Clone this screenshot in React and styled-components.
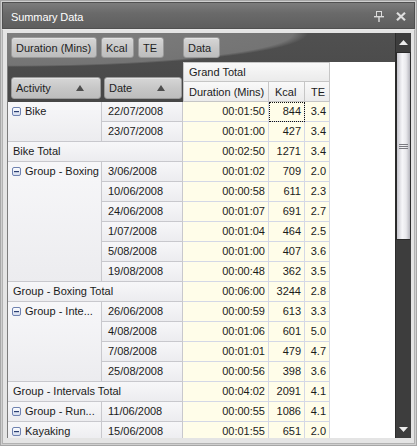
import React from 'react';
import styled, { createGlobalStyle } from 'styled-components';

const COLUMNS = '94px 81px 86px 36px 25px 1fr';

const GlobalStyle = createGlobalStyle`
  * {
    box-sizing: border-box;
  }

  html,
  body {
    margin: 0;
    padding: 0;
    background: #d2d2d2;
  }

  body {
    font-family: 'Liberation Sans', Arial, sans-serif;
    font-size: 11px;
    color: #1b1b1b;
  }
`;

const Window = styled.div`
  width: 417px;
  height: 446px;
  display: flex;
  flex-direction: column;
  border: 1px solid #a6a6a6;
  padding: 1px;
  background: #cfcfcf;
  overflow: hidden;
`;

const TitleBar = styled.div`
  height: 27px;
  flex: none;
  display: flex;
  align-items: center;
  padding: 3px 8px 0 8px;
  border: 1px solid #505050;
  background: linear-gradient(#7c7c7c, #6a6a6a 40%, #5e5e5e);
  color: #fff;
`;

const Title = styled.span`
  flex: 1;
  font-size: 11px;
  letter-spacing: -0.1px;
`;

const TitleTools = styled.div`
  display: flex;
  align-items: center;
  gap: 12px;
  margin-top: -2px;
`;

const Frame = styled.div`
  flex: 1;
  min-height: 0;
  display: flex;
  border: 1px solid #b2b2b2;
  border-top-color: #e8e8e8;
  background: #e4e4e4;
  padding: 3px 3px 5px 4px;
`;

const Pivot = styled.div`
  flex: 1;
  min-width: 0;
  display: flex;
  border-left: 1px solid #7c7c7c;
  overflow: hidden;
`;

const PivotGrid = styled.div`
  flex: 1;
  min-width: 0;
  display: flex;
  flex-direction: column;
  overflow: hidden;
  background: #fff;
`;

const HeaderGrid = styled.div`
  display: grid;
  grid-template-columns: ${COLUMNS};
  grid-template-rows: 29px 20px 20px;
  flex: none;
  background:
    radial-gradient(ellipse 300px 34px at 0 0, #7f7f7f 0%, #747474 95%, rgba(76, 76, 76, 0) 100%) no-repeat,
    linear-gradient(#505050, #474747);
`;

const FilterFields = styled.div`
  grid-column: 1 / 3;
  grid-row: 1;
  display: flex;
  align-items: flex-start;
  gap: 4px;
  padding: 4px 0 0 3px;
`;

const DataFields = styled.div`
  grid-column: 3 / 6;
  grid-row: 1;
  display: flex;
  align-items: flex-start;
  padding-top: 4px;
`;

const RowFields = styled.div`
  grid-column: 1 / 3;
  grid-row: 2 / 4;
  display: flex;
  align-items: flex-end;
  gap: 3px;
  padding: 0 0 3px 3px;
`;

const FieldButton = styled.div`
  width: ${(p) => p.$w}px;
  height: ${(p) => p.$h || 21}px;
  display: flex;
  align-items: center;
  justify-content: space-between;
  padding: 0 ${(p) => (p.$sort ? 16 : 3)}px 0 4px;
  border: 1px solid #9a9a9a;
  border-radius: 3px;
  background: linear-gradient(#d6d6d6, #c6c6c6 55%, #bdbdbd);
  box-shadow: inset 0 1px 0 rgba(255, 255, 255, 0.35);
  color: #1e1e1e;
  white-space: nowrap;
`;

const SortArrow = styled.span`
  width: 0;
  height: 0;
  border-left: 4px solid transparent;
  border-right: 4px solid transparent;
  border-bottom: 6px solid #4e4e4e;
`;

const ColumnHeader = styled.div`
  grid-column: ${(p) => p.$col};
  grid-row: ${(p) => p.$row};
  display: flex;
  align-items: center;
  padding-left: ${(p) => (p.$first ? 5 : 6)}px;
  background: linear-gradient(#f9f9f9, #ebebeb);
  border-right: 1px solid #c6c6c6;
  border-bottom: 1px solid #c6c6c6;
  border-top: ${(p) => (p.$top ? '1px solid #c6c6c6' : 'none')};
  border-left: ${(p) => (p.$first ? '1px solid #c6c6c6' : 'none')};
  white-space: nowrap;
`;

const HeaderFiller = styled.div`
  grid-column: 6;
  grid-row: 2 / 4;
  background: #fff;
`;

const BodyGrid = styled.div`
  display: grid;
  grid-template-columns: ${COLUMNS};
  grid-auto-rows: 20px;
  background: #fff;
`;

const RowHeader = styled.div`
  grid-column: ${(p) => p.$col};
  grid-row: ${(p) => (p.$span ? `span ${p.$span}` : 'auto')};
  padding-left: ${(p) => p.$pad}px;
  line-height: 19px;
  background: linear-gradient(#f7f7f9, #ececef);
  border-right: 1px solid #c8c8cd;
  border-bottom: 1px solid #c8c8cd;
  white-space: nowrap;
  overflow: hidden;
`;

const GroupLabel = styled.div`
  height: 19px;
  display: flex;
  align-items: center;
  gap: 4px;
`;

const DataCell = styled.div`
  grid-column: ${(p) => p.$col};
  text-align: right;
  padding-right: 3px;
  line-height: 19px;
  background: #fffde9;
  border-right: 1px solid #d4d8e6;
  border-bottom: 1px solid #d4d8e6;
  outline: ${(p) => (p.$focus ? '1px dotted #111' : 'none')};
  outline-offset: -1px;
`;

const ScrollBar = styled.div`
  width: 16px;
  flex: none;
  display: flex;
  flex-direction: column;
  background: #3d3d3d;
  border-left: 1px solid #2c2c2c;
`;

const ScrollButton = styled.div`
  height: ${(p) => p.$h}px;
  flex: none;
  display: flex;
  align-items: center;
  justify-content: center;
`;

const Thumb = styled.div`
  height: 188px;
  flex: none;
  display: flex;
  flex-direction: column;
  align-items: center;
  justify-content: center;
  gap: 1px;
  border: 1px solid #2a2a2a;
  background: linear-gradient(to right, #c6c6cd, #f6f6f9 40%, #e8e8ec 70%, #b5b5bd);
`;

const GripLine = styled.span`
  width: 9px;
  height: 1px;
  background: #7a7a80;
`;

const ScrollSpace = styled.div`
  flex: 1;
`;

function PinIcon() {
  return (
    <svg width="10" height="11" viewBox="0 0 10 11">
      <rect x="2.5" y="0.5" width="5" height="5" fill="none" stroke="#dcdcdc" />
      <rect x="0" y="5" width="10" height="1.4" fill="#dcdcdc" />
      <rect x="4.3" y="6" width="1.4" height="5" fill="#dcdcdc" />
    </svg>
  );
}

function CloseIcon() {
  return (
    <svg width="10" height="9" viewBox="0 0 10 9">
      <path d="M1 0.8 L9 8.2 M9 0.8 L1 8.2" stroke="#dedede" strokeWidth="2.2" />
    </svg>
  );
}

function CollapseIcon() {
  return (
    <svg width="9" height="9" viewBox="0 0 9 9">
      <defs>
        <linearGradient id="collapse-fill" x1="0" y1="0" x2="0" y2="1">
          <stop offset="0" stopColor="#ffffff" />
          <stop offset="1" stopColor="#d3dbee" />
        </linearGradient>
      </defs>
      <rect x="0.5" y="0.5" width="8" height="8" rx="1.5" fill="url(#collapse-fill)" stroke="#6f82b0" />
      <rect x="2" y="4" width="5" height="1.2" fill="#2b3f72" />
    </svg>
  );
}

function Arrow({ down }) {
  return (
    <svg width="9" height="5" viewBox="0 0 9 5">
      <polygon points={down ? '0,0 9,0 4.5,5' : '0,5 9,5 4.5,0'} fill="#ececec" />
    </svg>
  );
}

const rows = [
  { group: 'Bike', span: 2, date: '22/07/2008', dur: '00:01:50', kcal: '844', te: '3.4', focus: true },
  { date: '23/07/2008', dur: '00:01:00', kcal: '427', te: '3.4' },
  { total: 'Bike Total', dur: '00:02:50', kcal: '1271', te: '3.4' },
  { group: 'Group - Boxing', span: 6, date: '3/06/2008', dur: '00:01:02', kcal: '709', te: '2.0' },
  { date: '10/06/2008', dur: '00:00:58', kcal: '611', te: '2.3' },
  { date: '24/06/2008', dur: '00:01:07', kcal: '691', te: '2.7' },
  { date: '1/07/2008', dur: '00:01:04', kcal: '464', te: '2.5' },
  { date: '5/08/2008', dur: '00:01:00', kcal: '407', te: '3.6' },
  { date: '19/08/2008', dur: '00:00:48', kcal: '362', te: '3.5' },
  { total: 'Group - Boxing Total', dur: '00:06:00', kcal: '3244', te: '2.8' },
  { group: 'Group - Inte...', span: 4, date: '26/06/2008', dur: '00:00:59', kcal: '613', te: '3.3' },
  { date: '4/08/2008', dur: '00:01:06', kcal: '601', te: '5.0' },
  { date: '7/08/2008', dur: '00:01:01', kcal: '479', te: '4.7' },
  { date: '25/08/2008', dur: '00:00:56', kcal: '398', te: '3.6' },
  { total: 'Group - Intervals Total', dur: '00:04:02', kcal: '2091', te: '4.1' },
  { group: 'Group - Run...', span: 1, date: '11/06/2008', dur: '00:00:55', kcal: '1086', te: '4.1' },
  { group: 'Kayaking', span: 1, date: '15/06/2008', dur: '00:01:55', kcal: '651', te: '2.0' },
];

function PivotRow({ row }) {
  return (
    <>
      {row.total && (
        <RowHeader $col="1 / 3" $pad={5}>
          {row.total}
        </RowHeader>
      )}
      {row.group && (
        <RowHeader $col="1" $span={row.span} $pad={4}>
          <GroupLabel>
            <CollapseIcon />
            {row.group}
          </GroupLabel>
        </RowHeader>
      )}
      {row.date && (
        <RowHeader $col="2" $pad={6}>
          {row.date}
        </RowHeader>
      )}
      <DataCell $col="3">{row.dur}</DataCell>
      <DataCell $col="4" $focus={row.focus}>
        {row.kcal}
      </DataCell>
      <DataCell $col="5">{row.te}</DataCell>
    </>
  );
}

export default function App() {
  return (
    <>
      <GlobalStyle />
      <Window>
        <TitleBar>
          <Title>Summary Data</Title>
          <TitleTools>
            <PinIcon />
            <CloseIcon />
          </TitleTools>
        </TitleBar>
        <Frame>
          <Pivot>
            <PivotGrid>
              <HeaderGrid>
                <FilterFields>
                  <FieldButton $w={86}>Duration (Mins)</FieldButton>
                  <FieldButton $w={33}>Kcal</FieldButton>
                  <FieldButton $w={26}>TE</FieldButton>
                </FilterFields>
                <DataFields>
                  <FieldButton $w={37}>Data</FieldButton>
                </DataFields>
                <RowFields>
                  <FieldButton $w={90} $h={22} $sort>
                    Activity
                    <SortArrow />
                  </FieldButton>
                  <FieldButton $w={78} $h={22} $sort>
                    Date
                    <SortArrow />
                  </FieldButton>
                </RowFields>
                <ColumnHeader $col="3 / 6" $row="2" $top $first>
                  Grand Total
                </ColumnHeader>
                <ColumnHeader $col="3" $row="3" $first>
                  Duration (Mins)
                </ColumnHeader>
                <ColumnHeader $col="4" $row="3">
                  Kcal
                </ColumnHeader>
                <ColumnHeader $col="5" $row="3">
                  TE
                </ColumnHeader>
                <HeaderFiller />
              </HeaderGrid>
              <BodyGrid>
                {rows.map((row, i) => (
                  <PivotRow key={i} row={row} />
                ))}
              </BodyGrid>
            </PivotGrid>
            <ScrollBar>
              <ScrollButton $h={19}>
                <Arrow />
              </ScrollButton>
              <Thumb>
                <GripLine />
                <GripLine />
                <GripLine />
              </Thumb>
              <ScrollSpace />
              <ScrollButton $h={18}>
                <Arrow down />
              </ScrollButton>
            </ScrollBar>
          </Pivot>
        </Frame>
      </Window>
    </>
  );
}
